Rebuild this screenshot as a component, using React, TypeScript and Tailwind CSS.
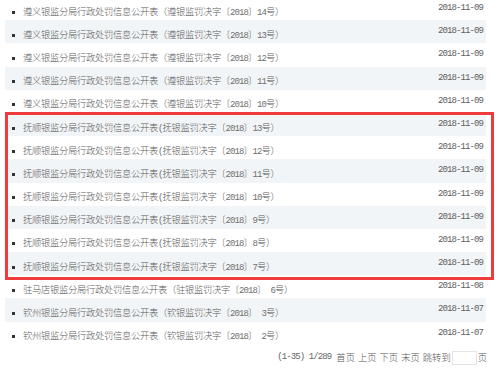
const rows = [
  { t: '遵义银监分局行政处罚信息公开表（遵银监罚决字〔2018〕14号）', d: '2018-11-09' },
  { t: '遵义银监分局行政处罚信息公开表（遵银监罚决字〔2018〕13号）', d: '2018-11-09' },
  { t: '遵义银监分局行政处罚信息公开表（遵银监罚决字〔2018〕12号）', d: '2018-11-09' },
  { t: '遵义银监分局行政处罚信息公开表（遵银监罚决字〔2018〕11号）', d: '2018-11-09' },
  { t: '遵义银监分局行政处罚信息公开表（遵银监罚决字〔2018〕10号）', d: '2018-11-09' },
  { t: '抚顺银监分局行政处罚信息公开表(抚银监罚决字〔2018〕13号）', d: '2018-11-09' },
  { t: '抚顺银监分局行政处罚信息公开表(抚银监罚决字〔2018〕12号）', d: '2018-11-09' },
  { t: '抚顺银监分局行政处罚信息公开表(抚银监罚决字〔2018〕11号）', d: '2018-11-09' },
  { t: '抚顺银监分局行政处罚信息公开表(抚银监罚决字〔2018〕10号）', d: '2018-11-09' },
  { t: '抚顺银监分局行政处罚信息公开表(抚银监罚决字〔2018〕9号）', d: '2018-11-09' },
  { t: '抚顺银监分局行政处罚信息公开表(抚银监罚决字〔2018〕8号）', d: '2018-11-09' },
  { t: '抚顺银监分局行政处罚信息公开表(抚银监罚决字〔2018〕7号）', d: '2018-11-09' },
  { t: '驻马店银监分局行政处罚信息公开表（驻银监罚决字〔2018〕 6号）', d: '2018-11-08' },
  { t: '钦州银监分局行政处罚信息公开表（钦银监罚决字〔2018〕 3号）', d: '2018-11-07' },
  { t: '钦州银监分局行政处罚信息公开表（钦银监罚决字〔2018〕 2号）', d: '2018-11-07' },
];

const cjk = { fontFamily: '"Noto Sans CJK SC", "Liberation Sans", sans-serif' };
const mono = { fontFamily: '"Liberation Mono", "Noto Sans CJK SC", monospace' };

// ASCII runs in mono (half-width, like SimSun), the rest in CJK font
function Mixed({ text }: { text: string }) {
  const parts = text.match(/[\x20-\x7e]+|[^\x20-\x7e]+/g) || [];
  return (
    <>
      {parts.map((p, i) =>
        /^[\x20-\x7e]+$/.test(p) ? (
          <span key={i} className="text-[9px] font-normal tracking-[-0.9px] text-[#707070]" style={mono}>{p}</span>
        ) : (
          <span key={i}>{p}</span>
        )
      )}
    </>
  );
}

export default function App() {
  return (
    <div className="relative w-[500px] h-[370px] overflow-hidden bg-white text-[#5a5a5a]">
      <ul className="-mt-[3px] pl-[5px] w-[486px]">
        {rows.map((r, i) => (
          <li
            key={i}
            className={`h-[23.2px] flex justify-between ${i % 2 === 1 ? 'bg-[#f2f5f7]' : ''}`}
          >
            <div className="flex items-center pt-[7px] pl-[7px]">
              <span className="w-[3px] h-[3px] bg-[#333] mr-[8px]" />
              <span className="text-[9.3px] leading-none font-light tracking-[-0.3px] whitespace-pre" style={cjk}>
                <Mixed text={r.t} />
              </span>
            </div>
            <span className="text-[9px] leading-none pt-[7px] tracking-[-0.9px] text-[#606060] pr-[3px]" style={mono}>{r.d}</span>
          </li>
        ))}
      </ul>
      <div className="flex justify-end items-center gap-[3px] pr-[13px] mt-[6px] text-[9.3px] font-light text-[#555]" style={cjk}>
        <span className="tracking-[-0.9px] text-[9px] font-normal text-[#666] mr-[2px]" style={mono}>(1-35) 1/289</span>
        <span>首页</span>
        <span>上页</span>
        <span>下页</span>
        <span>末页</span>
        <span className="flex items-center">
          跳转到
          <span className="inline-block w-[25px] h-[14px] border border-[#e5e5e5] ml-[1px] mr-[1px]" />
          页
        </span>
      </div>
      <div className="absolute left-[5px] top-[112px] w-[489px] h-[168px] border-[3px] border-[#ef3b3b]" />
    </div>
  );
}
